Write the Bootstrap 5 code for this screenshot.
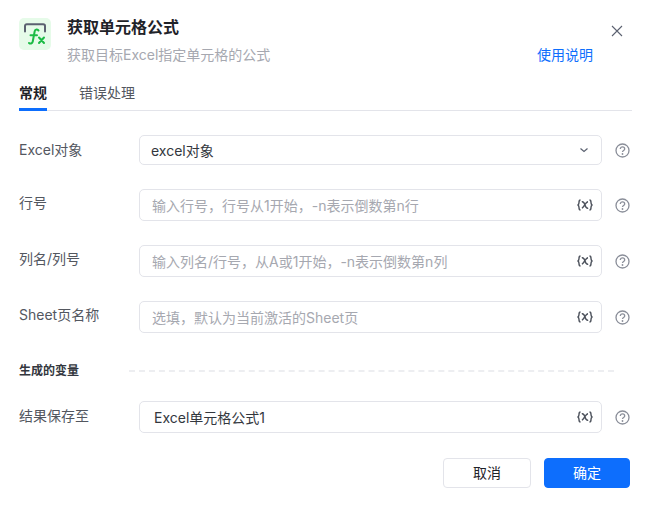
<!DOCTYPE html>
<html lang="zh-CN">
<head>
  <meta charset="UTF-8">
  <title>获取单元格公式</title>
  <link href="https://cdn.jsdelivr.net/npm/bootstrap@5.3.0/dist/css/bootstrap.min.css" rel="stylesheet">
  <style>
    html, body { height: 100%; }
    body { font-family: "Inter", "Noto Sans CJK SC", sans-serif; font-size: 14px; color: #1f2329; background: #fff; overflow: hidden; }
    .dialog { width: 652px; height: 506px; padding: 18px 20px 0 19px; }
    .logo { width: 32px; height: 32px; border-radius: 5px; background: #e6fbe9; flex: none; }
    .head-text { margin-left: 16px; margin-top: -2px; }
    .title { font-size: 16px; font-weight: 700; line-height: 22px; color: #1f2329; }
    .subtitle { font-size: 14px; line-height: 18px; color: #a6a8b0; margin-top: 8px; }
    .help-link { color: #0d6efd; text-decoration: none; margin-right: 18px; }
    .btn-x { margin: 7px 9px 0 0; line-height: 0; background: none; border: 0; padding: 0; }
    .tabs { margin-top: 14px; border-bottom: 1px solid #e3e4ea; height: 33px; gap: 32px; }
    .tabs a { font-size: 14px; line-height: 20px; color: #53575f; text-decoration: none; padding-top: 5px; height: 33px; }
    .tabs a.active { color: #1f2329; font-weight: 700; border-bottom: 3px solid #0d6efd; }
    .form-area { margin-top: 24px; }
    .field { height: 32px; margin-bottom: 24px; }
    .field.short { height: 30px; }
    .field label { width: 120px; flex: none; margin: 0; color: #53575f; line-height: 28px; padding-bottom: 4px; }
    .field.short label { padding-bottom: 0; }
    .box { width: 463px; height: 32px; border: 1px solid #e3e4ea; border-radius: 5px; padding: 0 8px 0 12px; }
    .field.short .box { height: 30px; padding-left: 11px; }
    .box .form-control { border: 0; padding: 0; font-size: 14px; height: 30px; color: #1f2329; box-shadow: none; background: transparent; }
    .box .form-control::placeholder { color: #a6a8b0; opacity: 1; }
    .box .value { font-size: 14px; color: #33373e; }
    .box.result { padding-left: 14px; }
    .q { margin-left: 13px; line-height: 0; }
    .var { width: 16px; height: 12px; flex: none; }
    .section { height: 20px; margin: 28px 0 20px; }
    .section span { width: 110px; flex: none; font-size: 12px; font-weight: 700; line-height: 20px; color: #33373e; }
    .section i { width: 485px; border-top: 2px dashed #edeef1; }
    .result-row label { padding-bottom: 2px; }
    .footer { margin-top: 25px; gap: 13px; padding-right: 2px; }
    .footer .btn { height: 30px; padding: 0; font-size: 14px; border-radius: 4px; line-height: 28px; }
    .btn-cancel { width: 88px; border: 1px solid #e3e4ea; background: #fff; color: #1f2329; }
    .btn-ok { width: 86px; }
  </style>
</head>
<body>
  <svg class="d-none">
    <symbol id="i-q" viewBox="0 0 15 15"><circle cx="7.500" cy="7.500" r="6.500" fill="none" stroke="#8a8e99" stroke-width="1.300"/><path d="M5.300 6c0-1.300 1-2.100 2.200-2.100S9.700 4.700 9.700 5.900c0 1.600-2.200 1.600-2.200 3.200" fill="none" stroke="#8a8e99" stroke-width="1.300"/><circle cx="7.500" cy="11" r=".9" fill="#8a8e99"/></symbol>
    <symbol id="i-var" viewBox="0 0 16 12"><path d="M3.500 1C2 1 2 2 2 3.500S1.500 5.500 1 6c.5.5 1 1 1 2.500S2 11 3.500 11M12.500 1C14 1 14 2 14 3.500s.5 2 1 2.500c-.5.5-1 1-1 2.500S14 11 12.500 11M4.800 2.800c2-.5 2.500 1 3.200 3.200s1.200 3.700 3.200 3.200M11 2.800C9 3 7 7.500 5 9.200" fill="none" stroke="#4d525c" stroke-width="1.400"/></symbol>
  </svg>
  <div class="dialog">
    <div class="d-flex">
      <div class="logo">
        <svg width="32" height="32" viewBox="0 0 32 32" fill="none">
          <path d="M6 13.500V8c0-1.100.7-1.800 1.800-1.800h16.400c1.100 0 1.800.7 1.800 1.800v5.500" stroke="#5b6170" stroke-width="2" stroke-linecap="round"/>
          <path d="M19.500 12.500c-.6-1.300-3.300-1.500-3.800.8l-2 10.500c-.4 1.900-2.500 2.300-3.700 1.200M11.500 17.300h6.500" stroke="#1cbb45" stroke-width="2" stroke-linecap="round"/>
          <path d="M20 19.500l5 5.500M25 19.500L20 25" stroke="#1cbb45" stroke-width="2" stroke-linecap="round"/>
        </svg>
      </div>
      <div class="head-text flex-grow-1 d-flex flex-column">
        <div class="title">获取单元格公式</div>
        <div class="d-flex justify-content-between">
          <div class="subtitle">获取目标Excel指定单元格的公式</div>
          <a class="help-link subtitle" href="#">使用说明</a>
        </div>
      </div>
      <button type="button" class="btn-x align-self-start" aria-label="关闭">
        <svg width="12" height="12" viewBox="0 0 12 12" fill="none"><path d="M1 1l10 10M11 1L1 11" stroke="#5b6170" stroke-width="1.100"/></svg>
      </button>
    </div>

    <div class="tabs d-flex">
      <a class="active" href="#">常规</a>
      <a href="#">错误处理</a>
    </div>

    <div class="form-area">
      <div class="field short d-flex align-items-center">
        <label>Excel对象</label>
        <div class="box d-flex align-items-center">
          <span class="value flex-grow-1">excel对象</span>
          <svg class="me-1" width="10" height="10" viewBox="0 0 10 10" fill="none"><path d="M1.500 3.500L5 6.500l3.500-3" stroke="#5b6170" stroke-width="1.200"/></svg>
        </div>
        <span class="q"><svg width="15" height="15"><use href="#i-q"/></svg></span>
      </div>

      <div class="field d-flex align-items-center">
        <label>行号</label>
        <div class="box d-flex align-items-center">
          <input class="form-control" type="text" placeholder="输入行号，行号从1开始，-n表示倒数第n行">
          <svg class="var"><use href="#i-var"/></svg>
        </div>
        <span class="q"><svg width="15" height="15"><use href="#i-q"/></svg></span>
      </div>

      <div class="field d-flex align-items-center">
        <label>列名/列号</label>
        <div class="box d-flex align-items-center">
          <input class="form-control" type="text" placeholder="输入列名/行号，从A或1开始，-n表示倒数第n列">
          <svg class="var"><use href="#i-var"/></svg>
        </div>
        <span class="q"><svg width="15" height="15"><use href="#i-q"/></svg></span>
      </div>

      <div class="field d-flex align-items-center">
        <label>Sheet页名称</label>
        <div class="box d-flex align-items-center">
          <input class="form-control" type="text" placeholder="选填，默认为当前激活的Sheet页">
          <svg class="var"><use href="#i-var"/></svg>
        </div>
        <span class="q"><svg width="15" height="15"><use href="#i-q"/></svg></span>
      </div>

      <div class="section d-flex align-items-center">
        <span>生成的变量</span>
        <i></i>
      </div>

      <div class="field result-row d-flex align-items-center">
        <label>结果保存至</label>
        <div class="box result d-flex align-items-center">
          <span class="value flex-grow-1">Excel单元格公式1</span>
          <svg class="var"><use href="#i-var"/></svg>
        </div>
        <span class="q"><svg width="15" height="15"><use href="#i-q"/></svg></span>
      </div>

      <div class="footer d-flex justify-content-end">
        <button type="button" class="btn btn-cancel">取消</button>
        <button type="button" class="btn btn-primary btn-ok">确定</button>
      </div>
    </div>
  </div>
  <script src="https://cdn.jsdelivr.net/npm/bootstrap@5.3.0/dist/js/bootstrap.bundle.min.js"></script>
</body>
</html>
